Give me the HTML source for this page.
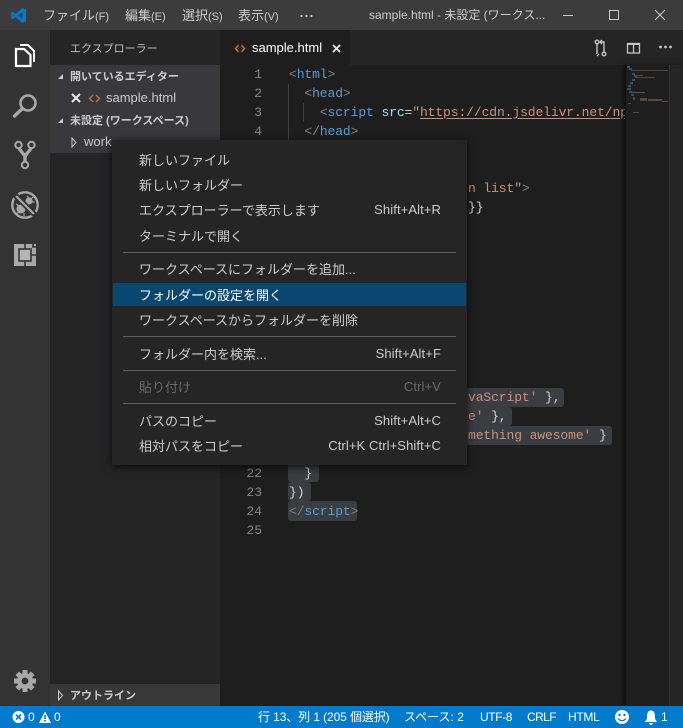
<!DOCTYPE html>
<html lang="ja"><head><meta charset="utf-8">
<style>
html,body{margin:0;padding:0;background:#1e1e1e}
#r{position:relative;width:683px;height:728px;overflow:hidden;font-family:"Liberation Sans","Noto Sans CJK JP",sans-serif;font-size:13px;color:#ccc}
.a{position:absolute}
.t{position:absolute;white-space:pre;line-height:20px;height:20px}
.t small{font-size:11px}
.c{position:absolute;white-space:pre;font-family:"Liberation Mono",monospace;font-size:13px;letter-spacing:-.1px;line-height:19px;height:19px}
.n{position:absolute;left:232px;width:30px;text-align:right;font-family:"Liberation Mono",monospace;font-size:13px;line-height:19px;color:#858585}
.b{color:#569cd6}.g{color:#808080}.l{color:#9cdcfe}.o{color:#ce9178}.w{color:#d4d4d4}
.m{position:absolute;left:139px;white-space:pre;line-height:20px;color:#ccc}
.k{position:absolute;right:242px;white-space:pre;line-height:20px;color:#ccc;font-size:13px;letter-spacing:.1px}
.s{position:absolute;left:123px;width:333px;height:1px;background:#606060}
.h{font-weight:700;font-size:11px;color:#ccc}
.st{position:absolute;white-space:pre;color:#fff;font-size:12px;line-height:22px;top:706px}
.sel{position:absolute;background:#3a3d41;border-radius:3px}
</style></head><body>
<div id="r">
<div class="a" style="left:0;top:0;width:683px;height:30px;background:#3c3c3c"></div>
<svg class="a" style="left:10px;top:7px" width="17" height="17" viewBox="0 0 18 18"><path d="M13 1 L17 2.8 V15.2 L13 17 L6 10.6 L3 13 L1 12 V6 L3 5 L6 7.4 Z" fill="#007acc"/><path d="M13 5.5 L8.5 9 L13 12.5 Z" fill="#3c3c3c"/><path d="M3 7.2 V10.8 L4.8 9 Z" fill="#3c3c3c"/></svg>
<div class="t" style="left:43px;top:6px">ファイル<small>(F)</small></div>
<div class="t" style="left:125px;top:6px">編集<small>(E)</small></div>
<div class="t" style="left:182px;top:6px">選択<small>(S)</small></div>
<div class="t" style="left:238px;top:6px">表示<small>(V)</small></div>
<svg class="a" style="left:300px;top:14px" width="13" height="4" fill="#ccc"><circle cx="1.5" cy="2" r="1.1"/><circle cx="6.5" cy="2" r="1.1"/><circle cx="11.5" cy="2" r="1.1"/></svg>
<div class="t" style="left:369px;top:5px;font-size:12px">sample.html - 未設定 (ワークス...</div>
<svg class="a" style="left:555px;top:5px" width="120" height="20" fill="none" stroke="#ccc" stroke-width="1"><path d="M8 10.5H18"/><rect x="54.5" y="5.5" width="9" height="9"/><path d="M100 5L110 15M110 5L100 15"/></svg>

<div class="a" style="left:0;top:30px;width:50px;height:676px;background:#333"></div>
<svg class="a" style="left:0;top:30px" width="50" height="676" fill="none">
<path d="M16 19H24L30.5 25V36H16Z" stroke="#fff" stroke-width="2.2"/>
<path d="M20 15H28L34 21V32" stroke="#fff" stroke-width="2"/>
<circle cx="28" cy="73" r="7.5" stroke="#a8a8a8" stroke-width="2.6"/><path d="M22 79L14.5 86" stroke="#a8a8a8" stroke-width="3.4" stroke-linecap="round"/>
<circle cx="18.5" cy="115" r="3.2" stroke="#a8a8a8" stroke-width="2"/><circle cx="31.5" cy="115" r="3.2" stroke="#a8a8a8" stroke-width="2"/><circle cx="25" cy="135" r="3.2" stroke="#a8a8a8" stroke-width="2"/>
<path d="M19 118.5L25 126L31 118.5M25 125V132" stroke="#a8a8a8" stroke-width="3.4"/>
<circle cx="25" cy="175" r="12.7" stroke="#a8a8a8" stroke-width="2.4"/>
<circle cx="21" cy="179" r="4.5" fill="#a8a8a8"/><circle cx="29" cy="171" r="3.6" fill="#a8a8a8"/>
<path d="M27 166L29 168M33 167L31 169M34.5 172H31M16 174L19 176M16 184L19 182M24 186V183" stroke="#a8a8a8" stroke-width="1.2"/>
<path d="M15 165L35 185" stroke="#333" stroke-width="5.5"/><path d="M16 166L34 184" stroke="#a8a8a8" stroke-width="2.2"/>
<rect x="14" y="214" width="22" height="22" fill="#a8a8a8"/>
<rect x="19" y="219" width="12" height="12" fill="#b4b4b4" stroke="#333" stroke-width="1.6"/>
<path d="M25 214V219M25 231V236M31 225H36M33 214V217H36" stroke="#333" stroke-width="1.6"/>
<g fill="#a8a8a8"><circle cx="25" cy="651" r="8"/>
<g id="gt"><rect x="22.5" y="640" width="5" height="22"/><rect x="14" y="648.5" width="22" height="5"/></g>
<rect x="22.5" y="640" width="5" height="22" transform="rotate(45 25 651)"/><rect x="22.5" y="640" width="5" height="22" transform="rotate(-45 25 651)"/></g>
<circle cx="25" cy="651" r="3.4" fill="#333"/>
</svg>

<div class="a" style="left:50px;top:30px;width:170px;height:676px;background:#252526"></div>
<div class="t" style="left:70px;top:39px;font-size:11px;color:#bbb">エクスプローラー</div>
<div class="a" style="left:50px;top:65px;width:170px;height:88px;background:#38383d"></div>
<svg class="a" style="left:50px;top:65px" width="170" height="88"><path d="M8 14L13 14L13 9Z" fill="#ccc"/><path d="M8 58L13 58L13 53Z" fill="#ccc"/><path d="M22 73V82L26 77.5Z" fill="none" stroke="#ccc"/><path d="M22 29L30 37M30 29L22 37" stroke="#e8e8e8" stroke-width="2"/><path d="M43 30L39.5 33.5L43 37M46 30L49.5 33.5L46 37" fill="none" stroke="#c5702d" stroke-width="1.4"/></svg>
<div class="t h" style="left:70px;top:67px">開いているエディター</div>
<div class="t" style="left:106px;top:88px;color:#ccc;font-size:13px">sample.html</div>
<div class="t h" style="left:70px;top:111px">未設定 (ワークスペース)</div>
<div class="t" style="left:84px;top:132px;color:#ccc;font-size:13px">work</div>
<div class="a" style="left:50px;top:684px;width:170px;height:22px;background:#383838"></div>
<svg class="a" style="left:50px;top:684px" width="20" height="22"><path d="M8.5 7V16L12.5 11.5Z" fill="none" stroke="#ccc"/></svg>
<div class="t h" style="left:70px;top:686px">アウトライン</div>

<div class="a" style="left:220px;top:30px;width:463px;height:35px;background:#252526"></div>
<div class="a" style="left:220px;top:30px;width:130px;height:35px;background:#1e1e1e"></div>
<svg class="a" style="left:234px;top:43px" width="12" height="11" fill="none" stroke="#c5702d" stroke-width="1.4"><path d="M4.5 2L1.5 5.5L4.5 9M7.5 2L10.5 5.5L7.5 9"/></svg>
<div class="t" style="left:252px;top:38px;color:#fff">sample.html</div>
<svg class="a" style="left:332px;top:44px" width="9" height="9" stroke="#e8e8e8" stroke-width="1.8"><path d="M1 1L8 8M8 1L1 8"/></svg>
<svg class="a" style="left:590px;top:38px" width="90" height="20" fill="none" stroke="#c5c5c5" stroke-width="1.4">
<circle cx="7" cy="4" r="1.8"/><circle cx="14" cy="16" r="1.8"/><path d="M7 6V16M14 14V4H10M12 2L10 4L12 6M9 16L7 18"/>
<rect x="37.5" y="5.5" width="12" height="9.5" stroke-width="1.3"/><path d="M37 6H50" stroke-width="2"/><path d="M43.5 5V15" stroke-width="1.3"/>
<g fill="#c5c5c5" stroke="none"><circle cx="70.5" cy="9" r="1.4"/><circle cx="75.5" cy="9" r="1.4"/><circle cx="80.5" cy="9" r="1.4"/></g>
</svg>

<div class="sel" style="left:288px;top:388px;width:276px;height:19px"></div>
<div class="sel" style="left:288px;top:407px;width:224px;height:19px"></div>
<div class="sel" style="left:288px;top:426px;width:324px;height:19px"></div>
<div class="sel" style="left:288px;top:445px;width:31px;height:37px"></div>
<div class="sel" style="left:288px;top:482px;width:23px;height:19px"></div>
<div class="sel" style="left:288px;top:501px;width:69px;height:20px"></div>

<div class="a" style="left:288px;top:84px;width:1px;height:57px;background:#404040"></div>
<div class="a" style="left:303px;top:103px;width:1px;height:19px;background:#404040"></div>

<div class="n" style="top:65px">1</div><div class="n" style="top:84px">2</div><div class="n" style="top:103px">3</div><div class="n" style="top:122px">4</div>
<div class="n" style="top:464px">22</div><div class="n" style="top:483px">23</div><div class="n" style="top:502px">24</div><div class="n" style="top:521px">25</div>

<div class="c" style="left:289px;top:65px"><span class="g">&lt;</span><span class="b">html</span><span class="g">&gt;</span></div>
<div class="c" style="left:289px;top:84px">  <span class="g">&lt;</span><span class="b">head</span><span class="g">&gt;</span></div>
<div class="a" style="left:220px;top:103px;width:405px;height:19px;overflow:hidden"><div class="c" style="left:69px;top:0">    <span class="g">&lt;</span><span class="b">script</span> <span class="l">src</span><span class="w">=</span><span class="o">"<u style="text-underline-offset:2px">https://cdn.jsdelivr.net/npm</u></span></div></div>
<div class="c" style="left:289px;top:122px">  <span class="g">&lt;/</span><span class="b">head</span><span class="g">&gt;</span></div>
<div class="c" style="left:468px;top:179px"><span class="o">n list"</span><span class="g">&gt;</span></div>
<div class="c" style="left:468px;top:198px"><span class="w">}}</span></div>
<div class="c" style="left:468px;top:388px"><span class="o">vaScript'</span> <span class="w">},</span></div>
<div class="c" style="left:468px;top:407px"><span class="o">e'</span> <span class="w">},</span></div>
<div class="c" style="left:468px;top:426px"><span class="o">mething awesome'</span> <span class="w">}</span></div>
<div class="c" style="left:289px;top:464px">  <span class="w">}</span></div>
<div class="c" style="left:289px;top:483px"><span class="w">})</span></div>
<div class="c" style="left:289px;top:502px"><span class="g">&lt;/</span><span class="b">script</span><span class="g">&gt;</span></div>

<div class="a" style="left:626px;top:65px;width:57px;height:641px;background:#1e1e1e;box-shadow:-3px 0 4px rgba(0,0,0,.5)"></div>
<div class="a" style="left:669px;top:65px;width:1px;height:641px;background:#333"></div>
<div class="a" style="left:670px;top:65px;width:13px;height:641px;background:#252525"></div>
<svg class="a" style="left:626px;top:65px" width="44" height="60" opacity=".75">
<g fill="#3a6484"><rect x="1" y="1" width="3" height="2"/><rect x="3" y="3" width="3" height="2"/><rect x="5" y="5" width="4" height="1"/><rect x="6" y="8" width="3" height="2"/><rect x="8" y="10" width="3" height="2"/><rect x="6" y="14" width="3" height="2"/><rect x="4" y="17" width="3" height="2"/><rect x="2" y="20" width="3" height="2"/><rect x="1" y="23" width="4" height="2"/><rect x="3" y="26" width="3" height="2"/><rect x="5" y="29" width="3" height="2"/><rect x="7" y="32" width="2" height="3"/><rect x="2" y="38" width="3" height="1"/><rect x="7" y="47" width="6" height="1"/></g>
<g fill="#6e5648"><rect x="9" y="5" width="33" height="1"/><rect x="10" y="10" width="7" height="1"/><rect x="9" y="12" width="20" height="1"/><rect x="14" y="33" width="7" height="3"/><rect x="22" y="34" width="14" height="2"/><rect x="36" y="36" width="6" height="1"/></g>
<rect x="5" y="27" width="14" height="1" fill="#3f7f7a"/>
</svg>

<div class="a" style="left:112px;top:140px;width:355px;height:325px;background:#252526;box-shadow:0 2px 8px rgba(0,0,0,.75)"></div>
<div class="a" style="left:113px;top:283px;width:353px;height:23px;background:#094771"></div>
<div class="m" style="top:151px">新しいファイル</div>
<div class="m" style="top:176px">新しいフォルダー</div>
<div class="m" style="top:201px">エクスプローラーで表示します</div><div class="k" style="top:200px">Shift+Alt+R</div>
<div class="m" style="top:227px">ターミナルで開く</div>
<div class="s" style="top:252px"></div>
<div class="m" style="top:260px">ワークスペースにフォルダーを追加...</div>
<div class="m" style="top:286px;color:#fff">フォルダーの設定を開く</div>
<div class="m" style="top:311px">ワークスペースからフォルダーを削除</div>
<div class="s" style="top:336px"></div>
<div class="m" style="top:345px">フォルダー内を検索...</div><div class="k" style="top:344px">Shift+Alt+F</div>
<div class="s" style="top:370px"></div>
<div class="m" style="top:378px;color:#6b6b6b">貼り付け</div><div class="k" style="top:377px;color:#6b6b6b">Ctrl+V</div>
<div class="s" style="top:403px"></div>
<div class="m" style="top:412px">パスのコピー</div><div class="k" style="top:411px">Shift+Alt+C</div>
<div class="m" style="top:437px">相対パスをコピー</div><div class="k" style="top:436px">Ctrl+K Ctrl+Shift+C</div>

<div class="a" style="left:0;top:706px;width:683px;height:22px;background:#007acc"></div>
<svg class="a" style="left:12px;top:710px" width="40" height="14"><circle cx="6.5" cy="7" r="6" fill="#fff"/><path d="M4 4.5L9 9.5M9 4.5L4 9.5" stroke="#007acc" stroke-width="1.6"/><path d="M33 1.5L39 13H27Z" fill="#fff"/><rect x="32.2" y="5" width="1.6" height="4" fill="#007acc"/><rect x="32.2" y="10" width="1.6" height="1.6" fill="#007acc"/></svg>
<div class="st" style="left:28px">0</div>
<div class="st" style="left:54px">0</div>
<div class="st" style="left:258px;letter-spacing:-.1px">行 13、列 1 (205 個選択)</div>
<div class="st" style="left:404px">スペース: 2</div>
<div class="st" style="left:480px;letter-spacing:-.4px">UTF-8</div>
<div class="st" style="left:527px;letter-spacing:-.6px">CRLF</div>
<div class="st" style="left:568px;letter-spacing:-.3px">HTML</div>
<svg class="a" style="left:614px;top:709px" width="16" height="16"><circle cx="8" cy="8" r="7" fill="#fff"/><circle cx="5.5" cy="6" r="1.2" fill="#007acc"/><circle cx="10.5" cy="6" r="1.2" fill="#007acc"/><path d="M4 9.5Q8 14 12 9.5" fill="none" stroke="#007acc" stroke-width="1.3"/></svg>
<svg class="a" style="left:644px;top:710px" width="14" height="16"><path d="M7 0.5C10.5 .5 11 4 11 7C11 9.5 12 10.5 13.5 12H.5C2 10.5 3 9.5 3 7C3 4 3.5 .5 7 .5Z" fill="#fff"/><path d="M5 13H9Q8.5 15 7 15Q5.5 15 5 13Z" fill="#fff"/></svg>
<div class="st" style="left:661px">1</div>
</div>
</body></html>
